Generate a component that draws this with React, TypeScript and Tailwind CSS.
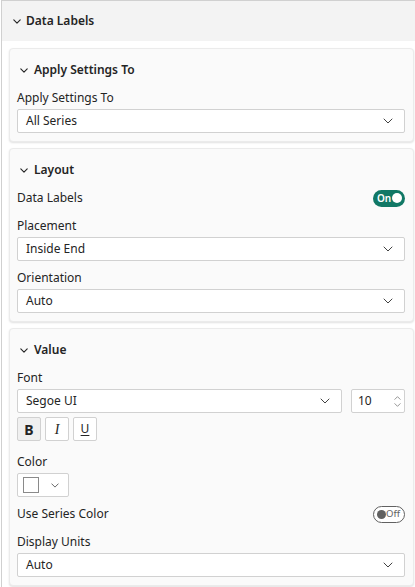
import React from "react";

const font = { fontFamily: '"Segoe UI", "Noto Sans", sans-serif' };

function Chevron({ className = "", w = 1 }: { className?: string; w?: number }) {
  return (
    <svg viewBox="0 0 10 6" className={className} fill="none">
      <path d="M1 1l4 4 4-4" stroke="currentColor" strokeWidth={w} strokeLinecap="round" strokeLinejoin="round" />
    </svg>
  );
}

function Select({ value }: { value: string }) {
  return (
    <div className="h-[24px] w-full bg-white border border-[#d1d1d1] rounded-[2px] flex items-center justify-between pl-[8px] pr-[11px] text-[12px] text-[#242424]">
      <span>{value}</span>
      <Chevron className="w-[10px] h-[6px] text-[#424242]" />
    </div>
  );
}

function Label({ children }: { children: React.ReactNode }) {
  return <div className="h-[22px] flex items-center text-[12px] text-[#242424]">{children}</div>;
}

function Field({ label, value }: { label: string; value: string }) {
  return (
    <div className="flex flex-col">
      <Label>{label}</Label>
      <Select value={value} />
    </div>
  );
}

function Card({ title, children }: { title: string; children: React.ReactNode }) {
  return (
    <div className="bg-[#fafafa] border border-[#ebebeb] rounded-[4px] shadow-[0_1px_2px_rgba(0,0,0,0.12)] pt-[10px] pb-[8px] pl-[7px] pr-[8px] flex flex-col gap-[6px]">
      <div className="h-[22px] flex items-center gap-[6px] pl-[3px] text-[12px] font-semibold text-[#242424]">
        <Chevron className="w-[8px] h-[5px] text-[#242424]" w={1.4} />
        <span>{title}</span>
      </div>
      {children}
    </div>
  );
}

function ToggleOn() {
  return (
    <div className="w-[32px] h-[17px] rounded-full bg-[#117865] flex items-center justify-between pl-[4px] pr-[3px]">
      <span className="text-[10px] font-semibold text-white leading-none">On</span>
      <span className="w-[10px] h-[10px] rounded-full bg-white" />
    </div>
  );
}

function ToggleOff() {
  return (
    <div className="w-[32px] h-[17px] rounded-full bg-white border border-[#616161] flex items-center justify-between pl-[3px] pr-[4px]">
      <span className="w-[9px] h-[9px] rounded-full bg-[#616161]" />
      <span className="text-[9.5px] text-[#616161] leading-none">Off</span>
    </div>
  );
}

function StyleButton({ children, active }: { children: React.ReactNode; active?: boolean }) {
  return (
    <div
      className={`w-[24px] h-[24px] border border-[#d1d1d1] rounded-[2px] flex items-center justify-center text-[14px] text-[#242424] ${
        active ? "bg-[#f0f0f0]" : "bg-white"
      }`}
    >
      {children}
    </div>
  );
}

export default function App() {
  return (
    <div className="w-[415px] h-[587px] overflow-hidden bg-white" style={font}>
      <div className="ml-[1px] border-l border-t border-[#d0d0d0] min-h-[587px]">
        <div className="h-[40px] bg-[#f3f3f3] flex items-center gap-[5px] pl-[11px] text-[12px] font-semibold text-[#242424]">
          <Chevron className="w-[8px] h-[5px] text-[#242424]" w={1.4} />
          <span>Data Labels</span>
        </div>
        <div className="pl-[7px] pr-[1px] pt-[7px] flex flex-col gap-[6px]">
          <Card title="Apply Settings To">
            <Field label="Apply Settings To" value="All Series" />
          </Card>

          <Card title="Layout">
            <div className="h-[22px] flex items-center justify-between text-[12px] text-[#242424]">
              <span>Data Labels</span>
              <ToggleOn />
            </div>
            <Field label="Placement" value="Inside End" />
            <Field label="Orientation" value="Auto" />
          </Card>

          <Card title="Value">
            <div className="flex flex-col">
              <Label>Font</Label>
              <div className="flex gap-[9px]">
                <div className="flex-1">
                  <Select value="Segoe UI" />
                </div>
                <div className="w-[54px] h-[24px] bg-white border border-[#d1d1d1] rounded-[2px] flex items-center justify-between pl-[6px] pr-[3px] text-[12px] text-[#242424]">
                  <span>10</span>
                  <div className="flex flex-col gap-[3px] text-[#616161]">
                    <Chevron className="w-[7px] h-[4px] rotate-180" />
                    <Chevron className="w-[7px] h-[4px]" />
                  </div>
                </div>
              </div>
              <div className="flex gap-[4px] mt-[4px]">
                <StyleButton active>
                  <span className="font-bold">B</span>
                </StyleButton>
                <StyleButton>
                  <span className="italic" style={{ fontFamily: '"Liberation Serif", serif' }}>
                    I
                  </span>
                </StyleButton>
                <StyleButton>
                  <span className="underline underline-offset-2 text-[12px]">U</span>
                </StyleButton>
              </div>
            </div>

            <div className="flex flex-col mt-[4px]">
              <Label>Color</Label>
              <div className="w-[52px] h-[24px] bg-white border border-[#d1d1d1] rounded-[2px] flex items-center pl-[5px] pr-[9px] justify-between">
                <span className="w-[16px] h-[16px] border border-[#8a8a8a] bg-white" />
                <Chevron className="w-[8px] h-[5px] text-[#424242]" />
              </div>
            </div>

            <div className="h-[22px] flex items-center justify-between text-[12px] text-[#242424]">
              <span>Use Series Color</span>
              <ToggleOff />
            </div>

            <Field label="Display Units" value="Auto" />
          </Card>
        </div>
      </div>
    </div>
  );
}
